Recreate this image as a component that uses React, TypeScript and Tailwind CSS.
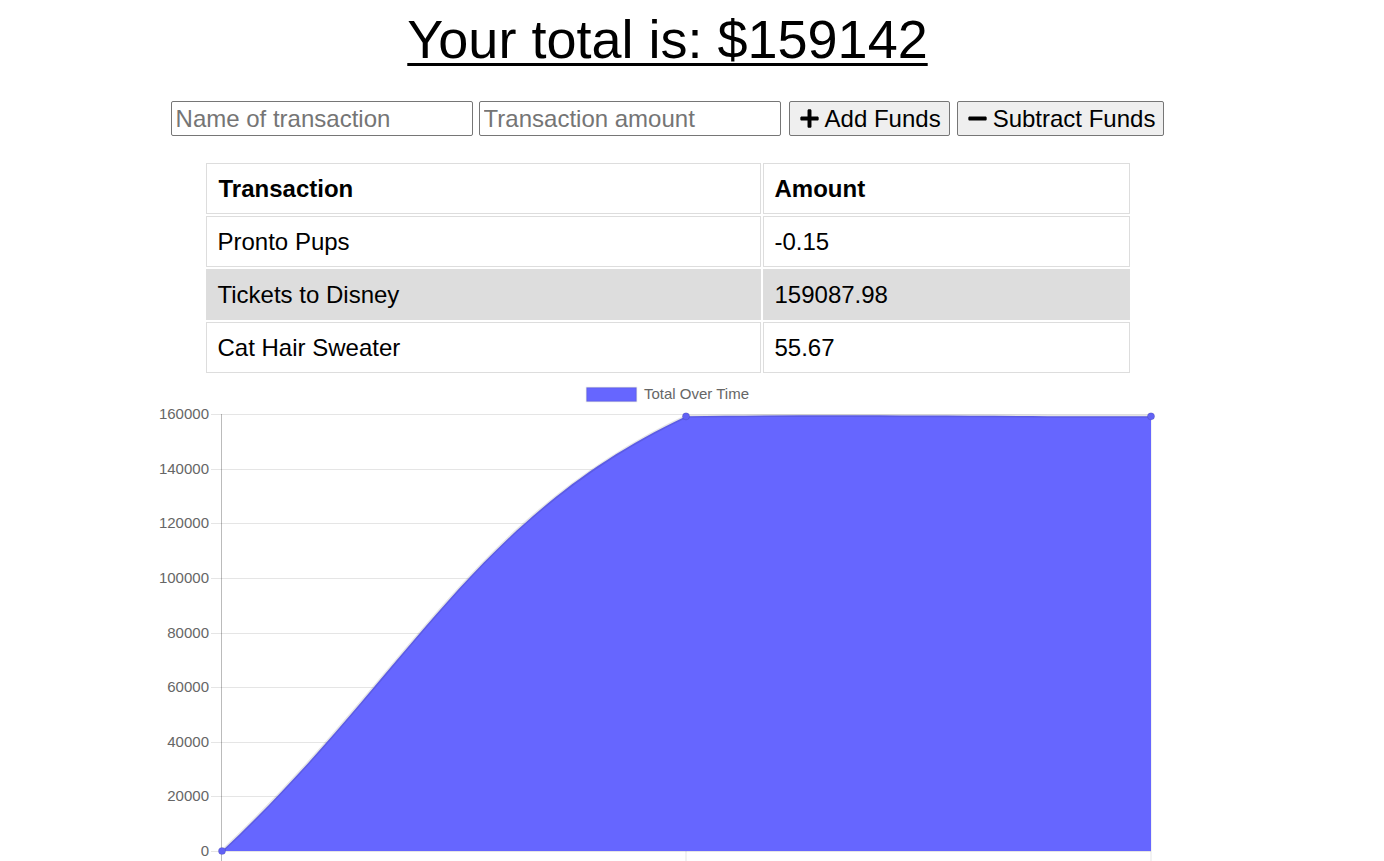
import { FaMinus, FaPlus } from 'react-icons/fa';

const transactions = [
  { name: 'Pronto Pups', value: '-0.15' },
  { name: 'Tickets to Disney', value: '159087.98' },
  { name: 'Cat Hair Sweater', value: '55.67' },
];

// chart geometry, in page pixels
const plotLeft = 221.5;
const plotRight = 1151;
const plotTop = 414;
const plotBottom = 851;
const maxValue = 160000;
const yOf = (v: number) => plotBottom - (v / maxValue) * (plotBottom - plotTop);
const ticks = [0, 20000, 40000, 60000, 80000, 100000, 120000, 140000, 160000];
const xGrid = [plotLeft, 686, plotRight];

const TotalChart = () => {
  const p0 = { x: 222, y: yOf(0) };
  const p1 = { x: 686, y: yOf(159143) };
  const p2 = { x: 1151, y: yOf(159143) };
  const curve = `M${p0.x},${p0.y} C407.6,677.4 471.4,517.3 ${p1.x},${p1.y} C843,${plotTop} 965,${p2.y} ${p2.x},${p2.y}`;

  return (
    <svg
      width={1335}
      height={495}
      viewBox="0 375 1335 495"
      className="block"
      style={{ fontFamily: "'Liberation Sans', Arial, sans-serif" }}
    >
      {/* legend */}
      <rect x={586.5} y={387.5} width={50} height={14} fill="#6666ff" stroke="rgba(0,0,0,0.1)" strokeWidth={1.5} />
      <text x={644} y={399} fontSize={15} fill="#666">
        Total Over Time
      </text>

      {/* grid */}
      {ticks.map((t) => (
        <g key={t}>
          <line x1={211} x2={plotRight} y1={Math.round(yOf(t)) + 0.5} y2={Math.round(yOf(t)) + 0.5} stroke="rgba(0,0,0,0.1)" />
          <text x={209} y={yOf(t) + 5} fontSize={15} fill="#666" textAnchor="end">
            {t}
          </text>
        </g>
      ))}
      {xGrid.map((x) => (
        <line key={x} x1={x} x2={x} y1={plotTop} y2={870} stroke="rgba(0,0,0,0.1)" />
      ))}
      <line x1={plotLeft} x2={plotLeft} y1={plotTop} y2={870} stroke="rgba(0,0,0,0.18)" />

      {/* area */}
      <path d={`${curve} L${p2.x},${plotBottom} L${p0.x},${plotBottom} Z`} fill="#6666ff" />
      <path d={curve} fill="none" stroke="rgba(0,0,0,0.1)" strokeWidth={3} />
      {[p0, p1, p2].map((p) => (
        <circle key={p.x} cx={p.x} cy={p.y} r={3.6} fill="#6262f4" stroke="rgba(0,0,0,0.1)" />
      ))}
    </svg>
  );
};

export default function App() {
  return (
    <div className="w-[1335px] flex flex-col items-center bg-white text-black font-['Liberation_Sans',Arial,sans-serif]">
      <h1 className="pt-[8px] text-[54px] leading-[62px] underline decoration-[3px] underline-offset-[5px]">
        Your total is: $159142
      </h1>

      <div className="mt-[31px] flex items-center text-[24px]">
        <input
          type="text"
          placeholder="Name of transaction"
          className="w-[302px] h-[35px] px-[4px] border border-[#767676] rounded-[2px] bg-white placeholder:text-[#757575] outline-none"
        />
        <input
          type="number"
          placeholder="Transaction amount"
          className="ml-[6px] w-[302px] h-[35px] px-[4px] border border-[#767676] rounded-[2px] bg-white placeholder:text-[#757575] outline-none"
        />
        <button className="ml-[8px] h-[35px] pl-[9px] pr-[8px] flex items-center gap-[5px] border border-[#767676] rounded-[2px] bg-[#efefef]">
          <FaPlus size={21} />
          <span>Add Funds</span>
        </button>
        <button className="ml-[7px] h-[35px] pl-[9px] pr-[8px] flex items-center gap-[5px] border border-[#767676] rounded-[2px] bg-[#efefef]">
          <FaMinus size={21} />
          <span>Subtract Funds</span>
        </button>
      </div>

      <table className="mt-[25px] w-[928px] table-fixed border-separate border-spacing-[2px] text-[24px] leading-[26px]">
        <thead>
          <tr>
            <th className="w-[555px] h-[51px] px-[12px] text-left font-bold border border-[#ddd]">Transaction</th>
            <th className="w-[367px] h-[51px] px-[11px] text-left font-bold border border-[#ddd]">Amount</th>
          </tr>
        </thead>
        <tbody>
          {transactions.map((t, i) => (
            <tr key={t.name} className={i === 1 ? 'bg-[#dddddd]' : ''}>
              <td className="h-[51px] px-[11px] border border-[#ddd]">{t.name}</td>
              <td className="h-[51px] px-[11px] border border-[#ddd]">{t.value}</td>
            </tr>
          ))}
        </tbody>
      </table>

      <TotalChart />
    </div>
  );
}
